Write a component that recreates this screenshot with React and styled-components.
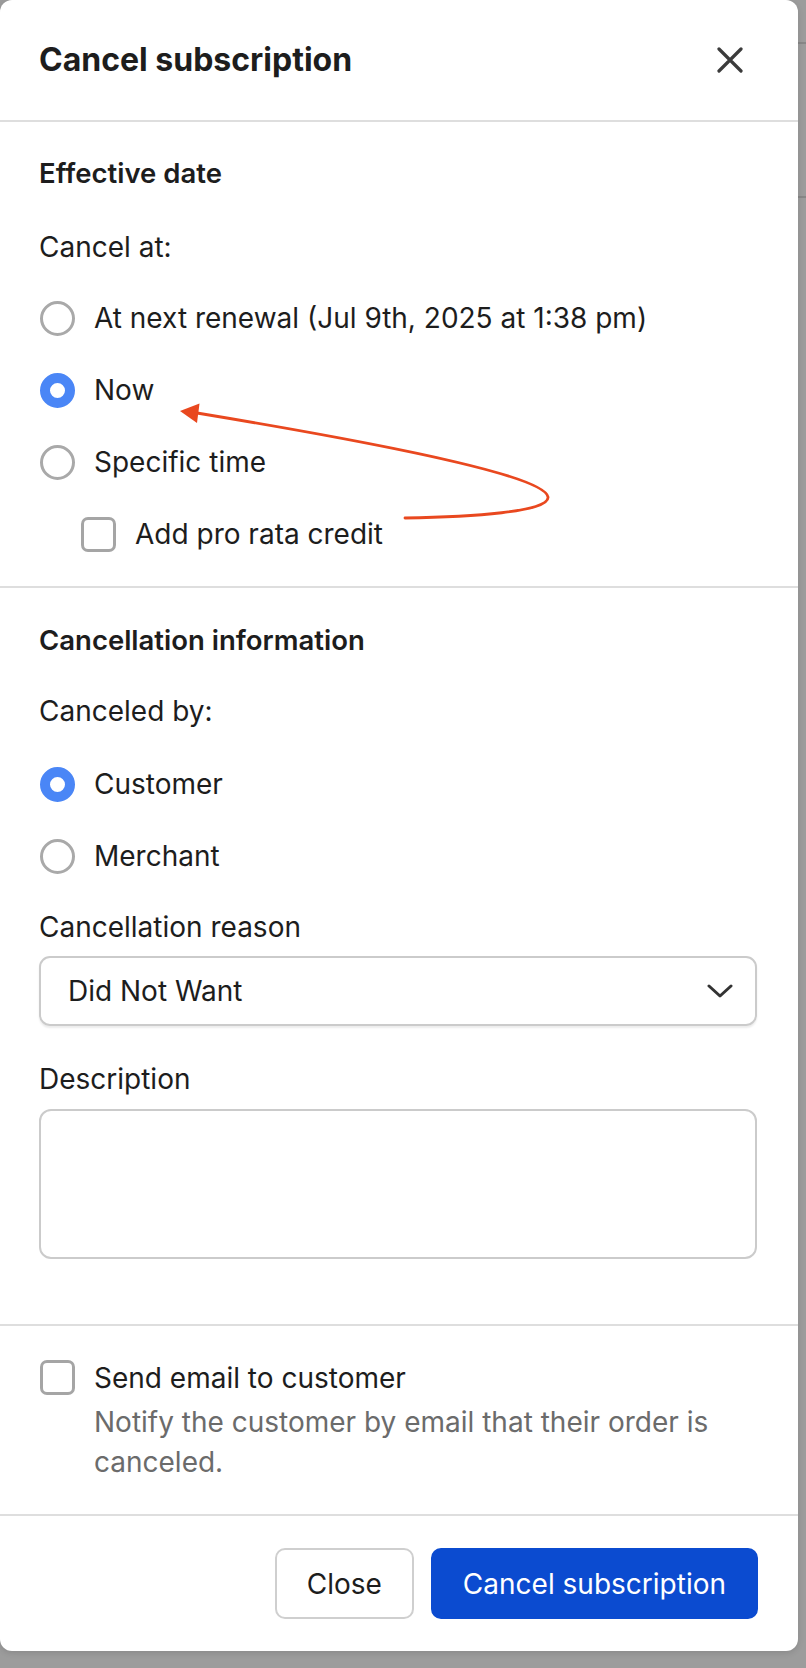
import React from "react";
import styled, { createGlobalStyle } from "styled-components";

const GlobalStyle = createGlobalStyle`
  html, body {
    margin: 0;
    padding: 0;
  }
  body {
    background: #9c9c9c;
    font-family: Inter, "Liberation Sans", Arial, sans-serif;
    -webkit-font-smoothing: antialiased;
  }
  * {
    box-sizing: border-box;
  }
`;

const Backdrop = styled.div`
  min-height: 1668px;
  background-color: #9c9c9c;
  background-image: linear-gradient(#878787, #878787),
    linear-gradient(#878787, #878787);
  background-size: 100% 2px;
  background-repeat: no-repeat;
  background-position: 0 42px, 0 196px;
`;

const Modal = styled.div`
  position: relative;
  width: 798px;
  background: #fff;
  border-radius: 12px;
  color: #1d1d1d;
  box-shadow: 0 2px 6px rgba(0, 0, 0, 0.12);
`;

const Header = styled.header`
  height: 122px;
  display: flex;
  align-items: center;
  justify-content: space-between;
  padding: 0 48px 0 39px;
  border-bottom: 2px solid #dedede;
`;

const Title = styled.h1`
  margin: 0;
  font-size: 32px;
  font-weight: 700;
  line-height: 40px;
`;

const IconButton = styled.button`
  width: 40px;
  height: 40px;
  padding: 0;
  border: none;
  background: none;
  display: flex;
  align-items: center;
  justify-content: center;
  color: #3b3b3b;
  cursor: pointer;
`;

const Section = styled.section`
  padding: ${(p) => p.$top}px 41px ${(p) => p.$bottom}px 39px;
  border-bottom: 2px solid #dedede;
  display: flex;
  flex-direction: column;
`;

const Heading = styled.h2`
  margin: 0;
  font-size: 27.5px;
  font-weight: 600;
  line-height: 36px;
`;

const Label = styled.div`
  margin-top: ${(p) => p.$gap || 0}px;
  font-size: 28px;
  line-height: 40px;
  color: #1d1d1d;
`;

const Options = styled.div`
  margin-top: ${(p) => p.$gap || 0}px;
  display: flex;
  flex-direction: column;
`;

const OptionRow = styled.label`
  height: 72px;
  display: flex;
  align-items: center;
  gap: 19px;
  margin-left: ${(p) => p.$indent || 1}px;
  font-size: 28px;
  line-height: 40px;
  cursor: pointer;
`;

const Radio = styled.span`
  width: 35px;
  height: 35px;
  flex: none;
  border-radius: 50%;
  background: #fff;
  border: ${(p) => (p.$checked ? "10.5px solid #4a86f6" : "3px solid #a9a9a9")};
`;

const Checkbox = styled.span`
  width: 35px;
  height: 35px;
  flex: none;
  margin-top: ${(p) => p.$top || 0}px;
  border-radius: 7px;
  background: #fff;
  border: 3px solid #a5a5a5;
`;

const SelectBox = styled.div`
  margin-top: 9px;
  height: 70px;
  display: flex;
  align-items: center;
  justify-content: space-between;
  padding: 0 22px 0 27px;
  border: 2px solid #cbcbcb;
  border-radius: 11px;
  box-shadow: 0 2px 2px rgba(0, 0, 0, 0.08);
  font-size: 28px;
  color: #1d1d1d;
`;

const TextArea = styled.textarea`
  margin-top: 10px;
  width: 100%;
  height: 150px;
  resize: none;
  border: 2px solid #cbcbcb;
  border-radius: 12px;
  padding: 16px 26px;
  font: inherit;
  font-size: 28px;
  outline: none;
`;

const CheckRow = styled.div`
  display: flex;
  align-items: flex-start;
  gap: 19px;
  margin-left: 1px;
`;

const CheckText = styled.div`
  display: flex;
  flex-direction: column;
`;

const Hint = styled.p`
  margin: 4px 0 0;
  font-size: 28px;
  line-height: 40px;
  color: #6b6b6b;
`;

const Footer = styled.footer`
  display: flex;
  justify-content: flex-end;
  gap: 17px;
  padding: 32px 40px 32px 39px;
`;

const Button = styled.button`
  height: 71px;
  padding: 0 30px;
  border-radius: 10px;
  font-family: inherit;
  font-size: 28px;
  cursor: pointer;
  border: 2px solid ${(p) => (p.$primary ? "#0b4bd0" : "#cfcfcf")};
  background: ${(p) => (p.$primary ? "#0b4bd0" : "#fff")};
  color: ${(p) => (p.$primary ? "#fff" : "#1d1d1d")};
`;

const Annotation = styled.svg`
  position: absolute;
  top: 0;
  left: 0;
  pointer-events: none;
`;

const CloseIcon = () => (
  <svg width="26" height="26" viewBox="0 0 26 26" fill="none">
    <path
      d="M2 2L24 24M24 2L2 24"
      stroke="currentColor"
      strokeWidth="3.2"
      strokeLinecap="round"
    />
  </svg>
);

const Chevron = () => (
  <svg width="26" height="16" viewBox="0 0 26 16" fill="none">
    <path
      d="M2 3L13 13L24 3"
      stroke="#333"
      strokeWidth="3"
      strokeLinecap="round"
      strokeLinejoin="round"
    />
  </svg>
);

const effectiveOptions = [
  { label: "At next renewal (Jul 9th, 2025 at 1:38 pm)", checked: false },
  { label: "Now", checked: true },
  { label: "Specific time", checked: false },
];

const cancelers = [
  { label: "Customer", checked: true },
  { label: "Merchant", checked: false },
];

export default function App() {
  return (
    <>
      <GlobalStyle />
      <Backdrop>
        <Modal>
          <Header>
            <Title>Cancel subscription</Title>
            <IconButton aria-label="Close">
              <CloseIcon />
            </IconButton>
          </Header>

          <Section $top={33} $bottom={16}>
            <Heading>Effective date</Heading>
            <Label $gap={36}>Cancel at:</Label>
            <Options $gap={15}>
              {effectiveOptions.map((o) => (
                <OptionRow key={o.label}>
                  <Radio $checked={o.checked} />
                  {o.label}
                </OptionRow>
              ))}
              <OptionRow $indent={42}>
                <Checkbox />
                Add pro rata credit
              </OptionRow>
            </Options>
          </Section>

          <Section $top={34} $bottom={65}>
            <Heading>Cancellation information</Heading>
            <Label $gap={33}>Canceled by:</Label>
            <Options $gap={17}>
              {cancelers.map((o) => (
                <OptionRow key={o.label}>
                  <Radio $checked={o.checked} />
                  {o.label}
                </OptionRow>
              ))}
            </Options>
            <Label $gap={15}>Cancellation reason</Label>
            <SelectBox>
              Did Not Want
              <Chevron />
            </SelectBox>
            <Label $gap={33}>Description</Label>
            <TextArea />
          </Section>

          <Section $top={32} $bottom={32}>
            <CheckRow>
              <Checkbox $top={2} />
              <CheckText>
                <Label>Send email to customer</Label>
                <Hint>
                  Notify the customer by email that their order is
                  <br />
                  canceled.
                </Hint>
              </CheckText>
            </CheckRow>
          </Section>

          <Footer>
            <Button>Close</Button>
            <Button $primary>Cancel subscription</Button>
          </Footer>

          <Annotation width="798" height="600" viewBox="0 0 798 600">
            <path
              d="M405 518 C470 517 550 512 548 497 C545 478 420 450 197 413"
              stroke="#e9481f"
              strokeWidth="2.8"
              fill="none"
              strokeLinecap="round"
            />
            <polygon points="180,411 199.5,403.5 197,423" fill="#e9481f" />
          </Annotation>
        </Modal>
      </Backdrop>
    </>
  );
}
